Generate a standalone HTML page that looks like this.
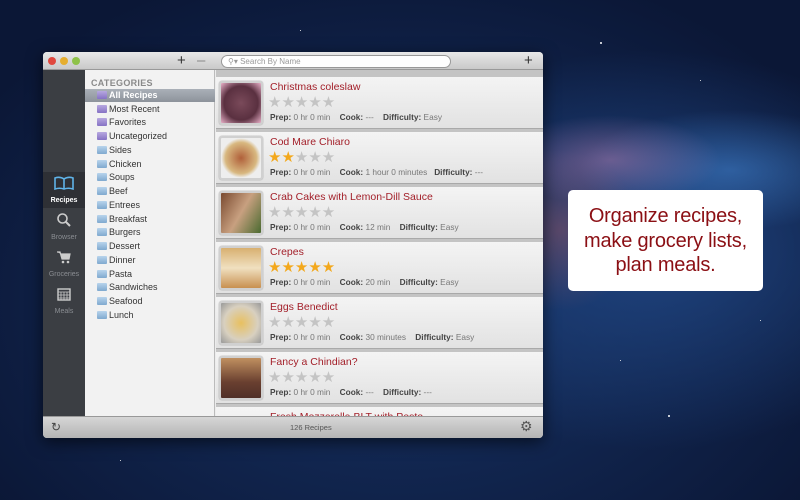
<!DOCTYPE html>
<html><head><style>
*{margin:0;padding:0;box-sizing:border-box}
body{width:800px;height:500px;overflow:hidden;position:relative;font-family:"Liberation Sans",sans-serif;
background:
radial-gradient(ellipse 110px 45px at 610px 160px,rgba(170,120,170,.55),transparent),
radial-gradient(ellipse 80px 80px at 560px 230px,rgba(130,80,100,.6),transparent),
radial-gradient(ellipse 150px 60px at 730px 170px,rgba(70,140,220,.5),transparent),
radial-gradient(ellipse 300px 200px at 650px 250px,#1f4480,transparent),
radial-gradient(ellipse 500px 350px at 400px 300px,#173366,#0b1736);}
.star{position:absolute;width:2px;height:2px;background:#fff;border-radius:50%}
.win{position:absolute;left:43px;top:52px;width:500px;height:386px;background:#ececec;border-radius:4px;overflow:hidden;box-shadow:0 4px 16px rgba(0,0,0,.6)}
.title{position:absolute;left:0;top:0;width:500px;height:18px;background:linear-gradient(#e8e8e8,#c9c9c9);border-bottom:1px solid #999}
.dot{position:absolute;top:5px;width:8px;height:8px;border-radius:50%}
.side{position:absolute;left:0;top:18px;width:42px;height:346px;background:#3b3e43}
.sb{position:absolute;left:0;width:42px;height:36px;text-align:center;color:#8a8d92;font-size:7px}
.sb div{position:absolute;left:0;width:42px;bottom:4px}
.cats{position:absolute;left:42px;top:18px;width:130px;height:346px;background:#f2f2f2;border-right:1px solid #bbb}
.ch{position:absolute;left:6px;top:8px;font-size:9px;color:#8a8a8a;font-weight:bold;letter-spacing:.3px}
.ci{position:absolute;left:0;width:130px;height:13px;font-size:9px;color:#333;padding-left:24px;line-height:13px}
.ci i{position:absolute;left:12px;top:2px;width:10px;height:8px;background:linear-gradient(#b8d4ec,#7fa9cf);border-radius:1px}
.ci.p i{background:linear-gradient(#b7a8e0,#8672c4)}
.ci.sel{background:linear-gradient(#aab0b8,#8d939b);color:#fff;font-weight:bold}
.list{position:absolute;left:173px;top:18px;width:327px;height:346px;background:#c4c4c4;overflow:hidden}
.row{position:absolute;left:0;width:327px;height:52px;background:linear-gradient(#f4f4f4,#e2e2e2);border-bottom:1px solid #a9a9a9}
.th{position:absolute;left:3px;top:4px;width:44px;height:44px;border:2px solid #d0d0d0;border-radius:3px;box-shadow:0 0 1px #777}
.rt{position:absolute;left:54px;top:4px;font-size:10.5px;color:#a3202a}
.st{position:absolute;left:52px;top:16px;font-size:15px;color:#c4c4c4;letter-spacing:0}
.st b{color:#f3a81c;font-weight:normal}
.mt{position:absolute;left:54px;top:35px;font-size:8.3px;color:#777;white-space:nowrap}
.mt b{color:#444}
.bot{position:absolute;left:0;top:364px;width:500px;height:22px;background:linear-gradient(#d6d6d6,#b4b4b4);border-top:1px solid #999;font-size:7.5px;color:#555}
.call{position:absolute;left:568px;top:190px;width:195px;height:101px;background:#fff;border-radius:5px;color:#8b0f14;font-size:20px;text-align:center;line-height:24.5px;padding-top:14px;font-family:"Liberation Sans",sans-serif;letter-spacing:-.2px}
</style></head><body>
<div class="star" style="left:600px;top:42px"></div>
<div class="star" style="left:668px;top:415px"></div>
<div class="star" style="left:700px;top:80px;width:1px;height:1px"></div>
<div class="star" style="left:760px;top:320px;width:1px;height:1px"></div>
<div class="star" style="left:620px;top:360px;width:1px;height:1px"></div>
<div class="star" style="left:300px;top:30px;width:1px;height:1px"></div>
<div class="star" style="left:120px;top:460px;width:1px;height:1px"></div>

<div class="win">
 <div class="title">
  <div class="dot" style="left:5px;background:#e0483e"></div>
  <div class="dot" style="left:17px;background:#e6ae2f"></div>
  <div class="dot" style="left:29px;background:#8fc249"></div>
  <div style="position:absolute;left:134px;top:0;font-size:15px;color:#333;line-height:18px">+</div>
  <div style="position:absolute;left:154px;top:0;font-size:15px;color:#888;line-height:17px">–</div>
  <div style="position:absolute;left:178px;top:3px;width:230px;height:13px;background:#fff;border:1px solid #999;border-radius:7px;font-size:8px;color:#999;line-height:11px;padding-left:6px">⚲▾ Search By Name</div>
  <div style="position:absolute;left:481px;top:0;font-size:15px;color:#333;line-height:18px">+</div>
 </div>
 <div class="side">
  <div class="sb" style="top:102px;background:#2e3035;color:#fff;font-weight:bold">
   <svg width="20" height="14" viewBox="0 0 20 14" style="margin-top:4px"><path d="M10 3C7 1 4 1 1 2V13C4 12 7 12 10 13C13 12 16 12 19 13V2C16 1 13 1 10 3ZM10 3V13" fill="none" stroke="#5fb3e8" stroke-width="1.6"/></svg>
   <div>Recipes</div></div>
  <div class="sb" style="top:139px">
   <svg width="16" height="16" viewBox="0 0 16 16" style="margin-top:3px"><circle cx="6.5" cy="6.5" r="4.5" fill="none" stroke="#ccc" stroke-width="1.6"/><path d="M10 10L14 14" stroke="#ccc" stroke-width="2"/></svg>
   <div>Browser</div></div>
  <div class="sb" style="top:176px">
   <svg width="16" height="14" viewBox="0 0 16 14" style="margin-top:4px"><path d="M1 2H4L6 9H13L14 4H5" fill="#ccc" stroke="#ccc" stroke-width="1.2"/><circle cx="7" cy="12" r="1.3" fill="#ccc"/><circle cx="12" cy="12" r="1.3" fill="#ccc"/></svg>
   <div>Groceries</div></div>
  <div class="sb" style="top:213px">
   <svg width="14" height="14" viewBox="0 0 14 14" style="margin-top:4px"><rect x="1" y="2" width="12" height="11" fill="none" stroke="#ccc" stroke-width="1.4"/><path d="M1 5H13M4 5V13M7 5V13M10 5V13M1 8H13M1 11H13" stroke="#ccc" stroke-width=".8"/></svg>
   <div>Meals</div></div>
 </div>
 <div class="cats">
  <div class="ch">CATEGORIES</div>
  <div class="ci p sel" style="top:19px"><i></i>All Recipes</div>
  <div class="ci p" style="top:33px"><i></i>Most Recent</div>
  <div class="ci p" style="top:46px"><i></i>Favorites</div>
  <div class="ci p" style="top:60px"><i></i>Uncategorized</div>
  <div class="ci" style="top:74px"><i></i>Sides</div>
  <div class="ci" style="top:88px"><i></i>Chicken</div>
  <div class="ci" style="top:101px"><i></i>Soups</div>
  <div class="ci" style="top:115px"><i></i>Beef</div>
  <div class="ci" style="top:129px"><i></i>Entrees</div>
  <div class="ci" style="top:143px"><i></i>Breakfast</div>
  <div class="ci" style="top:156px"><i></i>Burgers</div>
  <div class="ci" style="top:170px"><i></i>Dessert</div>
  <div class="ci" style="top:184px"><i></i>Dinner</div>
  <div class="ci" style="top:198px"><i></i>Pasta</div>
  <div class="ci" style="top:211px"><i></i>Sandwiches</div>
  <div class="ci" style="top:225px"><i></i>Seafood</div>
  <div class="ci" style="top:239px"><i></i>Lunch</div>
 </div>
 <div class="list">
  <div class="row" style="top:7px"><div class="th" style="background:radial-gradient(#7a4a5a,#5a3040 60%,#e8b0c8)"></div><div class="rt">Christmas coleslaw</div><div class="st">★★★★★</div><div class="mt"><b>Prep:</b> 0 hr 0 min &nbsp;&nbsp; <b>Cook:</b> --- &nbsp;&nbsp; <b>Difficulty:</b> Easy</div></div>
  <div class="row" style="top:62px"><div class="th" style="background:radial-gradient(#b0603a,#d8b880 55%,#eee 70%)"></div><div class="rt">Cod Mare Chiaro</div><div class="st"><b>★★</b>★★★</div><div class="mt"><b>Prep:</b> 0 hr 0 min &nbsp;&nbsp; <b>Cook:</b> 1 hour 0 minutes &nbsp; <b>Difficulty:</b> ---</div></div>
  <div class="row" style="top:117px"><div class="th" style="background:linear-gradient(120deg,#7a4a30,#c8a080 50%,#4a6a30)"></div><div class="rt">Crab Cakes with Lemon-Dill Sauce</div><div class="st">★★★★★</div><div class="mt"><b>Prep:</b> 0 hr 0 min &nbsp;&nbsp; <b>Cook:</b> 12 min &nbsp;&nbsp; <b>Difficulty:</b> Easy</div></div>
  <div class="row" style="top:172px"><div class="th" style="background:linear-gradient(#d8b070,#f0e0c0 50%,#c89050)"></div><div class="rt">Crepes</div><div class="st"><b>★★★★★</b></div><div class="mt"><b>Prep:</b> 0 hr 0 min &nbsp;&nbsp; <b>Cook:</b> 20 min &nbsp;&nbsp; <b>Difficulty:</b> Easy</div></div>
  <div class="row" style="top:227px"><div class="th" style="background:radial-gradient(#e8c060,#d8d0c0 60%,#999)"></div><div class="rt">Eggs Benedict</div><div class="st">★★★★★</div><div class="mt"><b>Prep:</b> 0 hr 0 min &nbsp;&nbsp; <b>Cook:</b> 30 minutes &nbsp;&nbsp; <b>Difficulty:</b> Easy</div></div>
  <div class="row" style="top:282px"><div class="th" style="background:linear-gradient(#c09060,#6a4030 60%,#503028)"></div><div class="rt">Fancy a Chindian?</div><div class="st">★★★★★</div><div class="mt"><b>Prep:</b> 0 hr 0 min &nbsp;&nbsp; <b>Cook:</b> --- &nbsp;&nbsp; <b>Difficulty:</b> ---</div></div>
  <div class="row" style="top:337px"><div class="rt">Fresh Mozzarella BLT with Pesto</div></div>
 </div>
 <div class="bot">
  <div style="position:absolute;left:8px;top:3px;font-size:12px;color:#444">↻</div>
  <div style="position:absolute;left:247px;top:6px">126 Recipes</div>
  <div style="position:absolute;left:477px;top:1px;font-size:14px;color:#555">⚙</div>
 </div>
</div>
<div class="call">Organize recipes,<br>make grocery lists,<br>plan meals.</div>
</body></html>
